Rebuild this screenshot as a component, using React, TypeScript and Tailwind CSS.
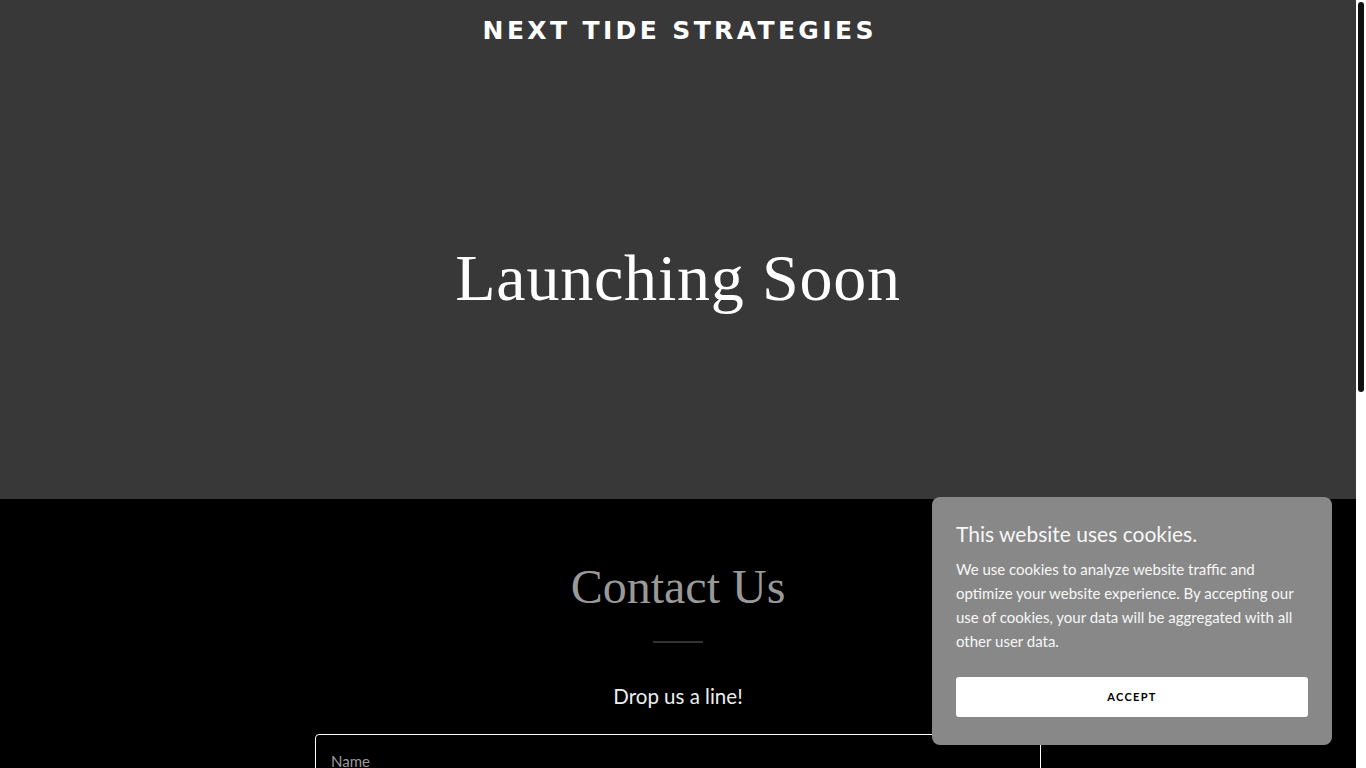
import React from "react";

export default function App() {
  const sans = { fontFamily: "Lato, 'Open Sans', sans-serif" };
  return (
    <div className="h-[768px] overflow-hidden bg-black flex" style={sans}>
      <div className="w-[1356px] shrink-0">
        <section className="h-[499px] bg-[#383838] flex flex-col items-center">
          <div
            className="pt-[16px] text-white text-[25px] font-bold tracking-[0.135em] leading-[30px] pl-[0.135em]"
            style={{ fontFamily: "'DejaVu Sans', sans-serif" }}
          >
            NEXT TIDE STRATEGIES
          </div>
          <h1
            className="mt-[192px] text-white text-[66px] leading-[80px] tracking-[0.8px]"
            style={{ fontFamily: "'Liberation Serif', 'DejaVu Serif', serif" }}
          >
            Launching Soon
          </h1>
        </section>
        <section className="flex flex-col items-center pt-[58px]">
          <h2
            className="text-[#999999] text-[48px] leading-[60px]"
            style={{ fontFamily: "'Liberation Serif', serif" }}
          >
            Contact Us
          </h2>
          <div className="mt-[24px] w-[50px] h-[2px] bg-[#333333]" />
          <p className="mt-[39px] text-[#eeeeee] text-[20.5px] leading-[28px]">Drop us a line!</p>
          <div className="mt-[24px] w-[726px] h-[60px] border border-white rounded-[4px] px-[15px] pt-[14px]">
            <span className="text-[#9a9a9a] text-[15px]">Name</span>
          </div>
        </section>
      </div>
      <div className="w-[10px] shrink-0 bg-white pt-[2px] pl-[2px]">
        <div className="w-[6px] h-[390px] rounded-[3px] bg-[#111111]" />
      </div>
      <div className="fixed left-[932px] top-[497px] w-[400px] h-[248px] rounded-[8px] bg-[#888888] px-[24px] pt-[22px]">
        <div className="text-[#f7f7f7] text-[21px] leading-[30px]">This website uses cookies.</div>
        <p className="mt-[8px] text-[#f7f7f7] text-[15px] leading-[24px]">
          We use cookies to analyze website traffic and optimize your website experience. By accepting our use of cookies, your data will be aggregated with all other user data.
        </p>
        <button className="mt-[24px] w-full h-[40px] bg-white rounded-[3px] text-black text-[11px] font-bold tracking-[0.12em]">
          ACCEPT
        </button>
      </div>
    </div>
  );
}
